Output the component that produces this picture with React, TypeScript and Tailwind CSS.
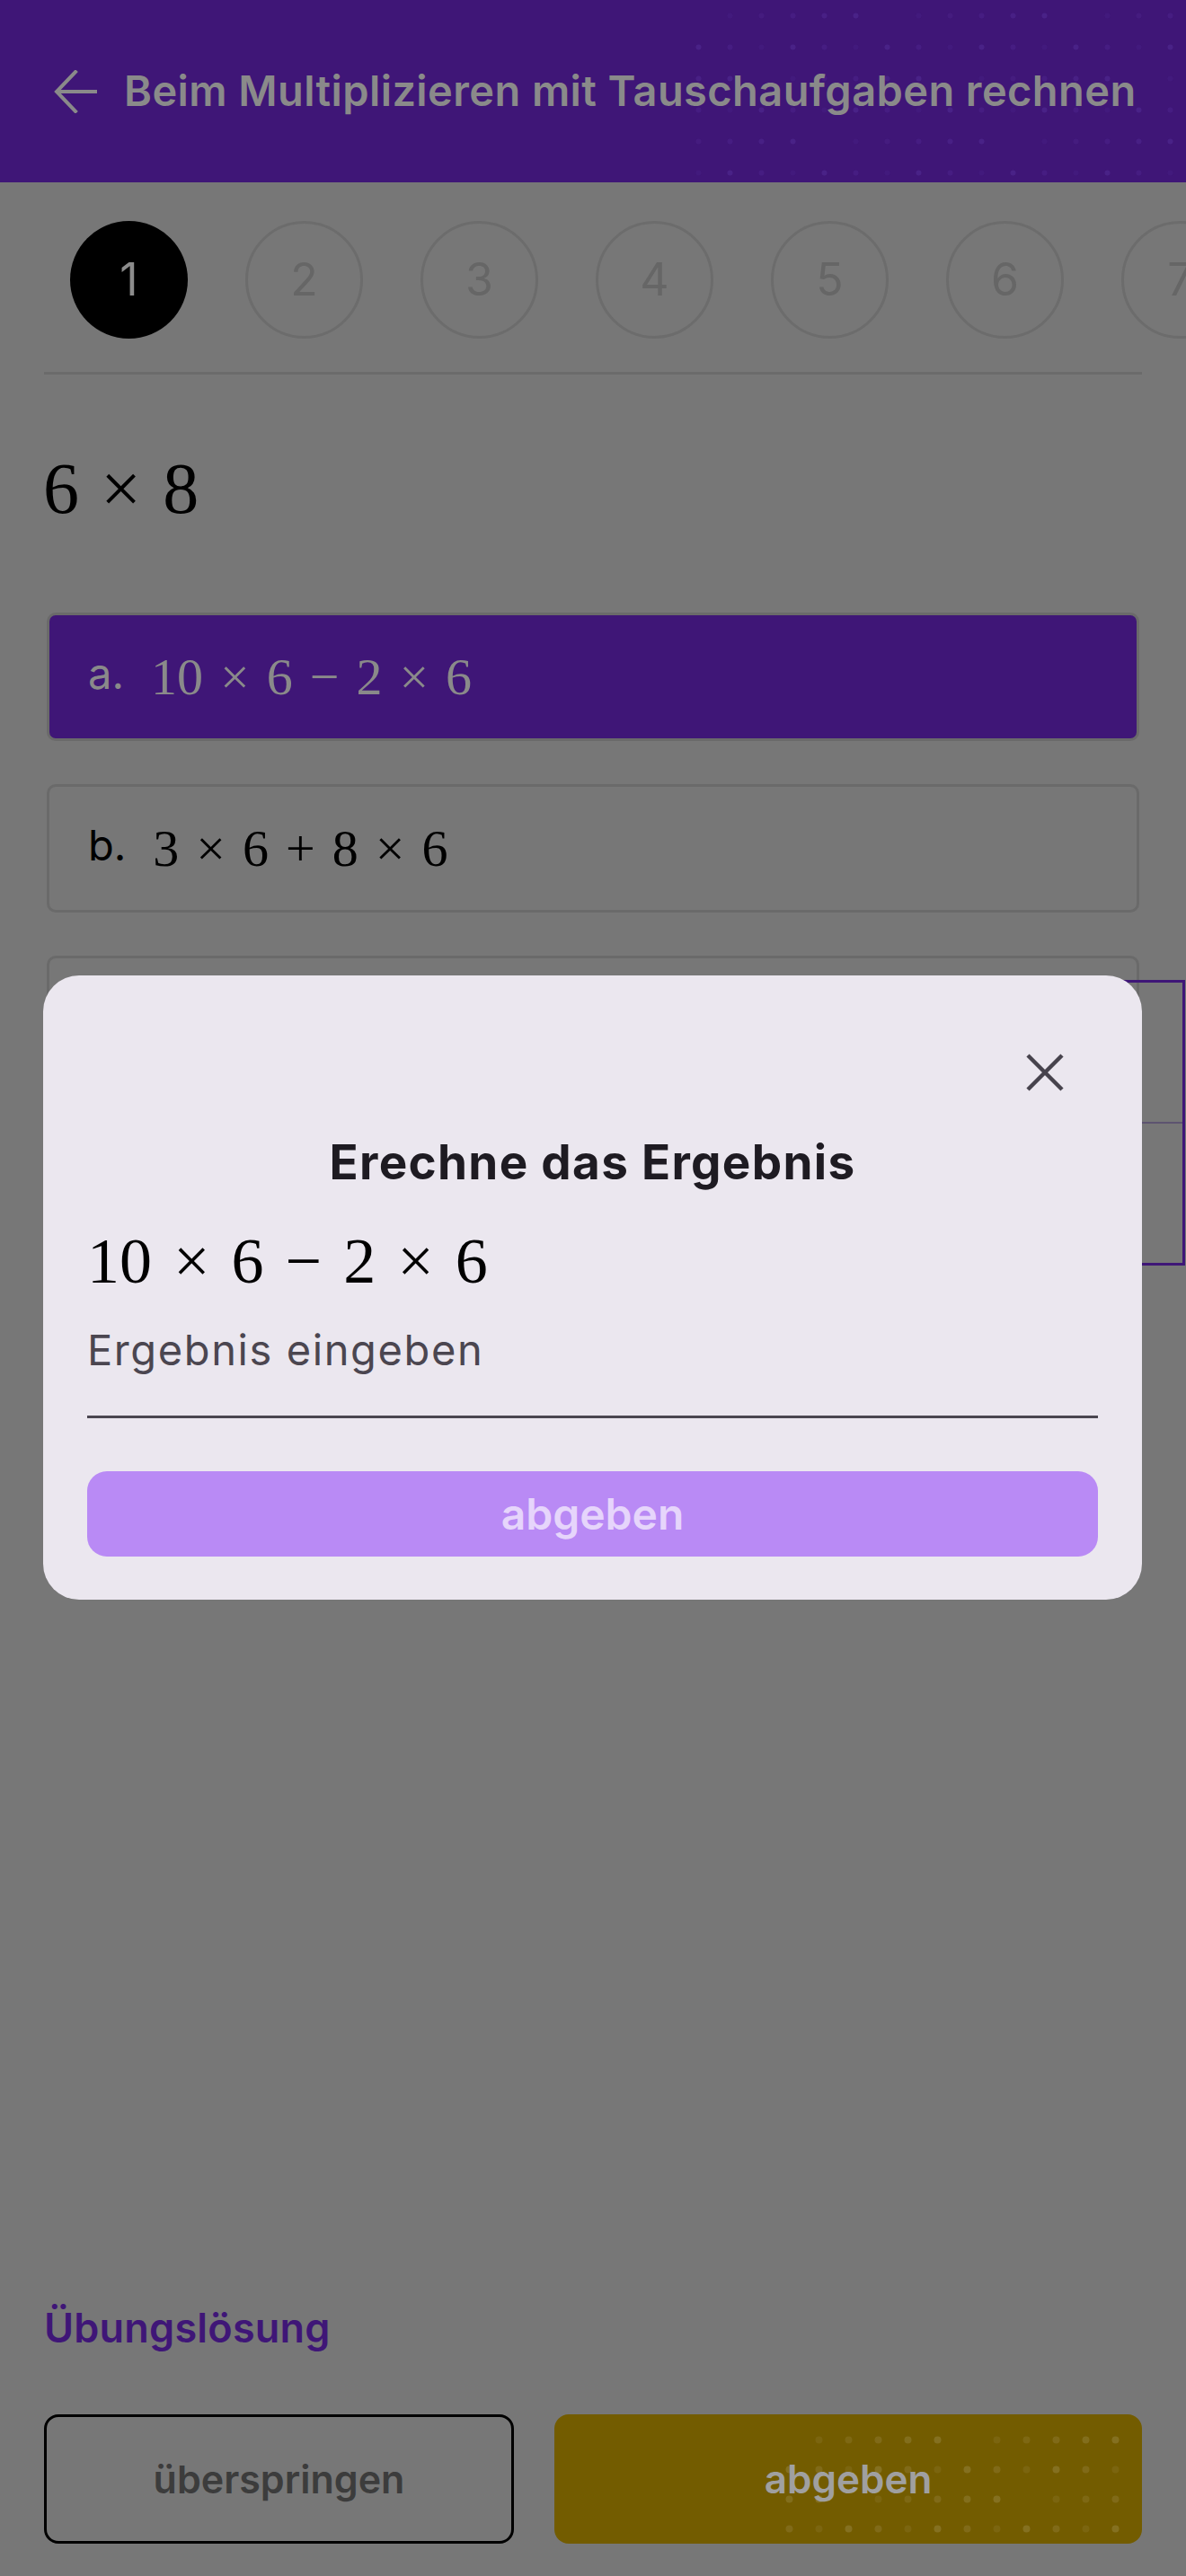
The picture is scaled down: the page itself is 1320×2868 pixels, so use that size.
const sans = "font-[family-name:Inter,'Noto_Sans',sans-serif]";
const serif = "font-[family-name:'Liberation_Serif','DejaVu_Serif',serif]";

type Tok = { t: string; op?: boolean };

const toks = (s: string): Tok[] =>
  s.split(' ').map((t) => ({ t, op: t === '×' || t === '−' || t === '+' }));

const MathExpr = ({ expr, size, gap }: { expr: string; size: string; gap: string }) => (
  <span className={`${serif} ${size} leading-none whitespace-nowrap inline-flex items-center`}>
    {toks(expr).map((k, i) =>
      k.op ? (
        <span key={i} className={gap}>
          {k.t}
        </span>
      ) : (
        <span key={i}>{k.t}</span>
      )
    )}
  </span>
);

const ArrowBack = () => (
  <svg width="48" height="48" viewBox="0 0 48 48" fill="none" stroke="#8a8a8a" strokeWidth="4" strokeLinecap="square">
    <path d="M47 24H4" />
    <path d="M24 2L3 24l21 22" />
  </svg>
);

const CloseIcon = () => (
  <svg width="42" height="42" viewBox="0 0 42 42" stroke="#47434d" strokeWidth="4.5">
    <path d="M2 2L40 40M40 2L2 40" />
  </svg>
);

// dotted texture used on the header and the yellow button
const Dots = ({ cols, rows, step, r, color, base }: { cols: number; rows: number; step: number; r: number; color: string; base: number }) => {
  const dots = [];
  for (let y = 0; y < rows; y++) {
    for (let x = 0; x < cols; x++) {
      const v = (x * 7 + y * 11 + x * y * 3) % 6;
      if (v === 0) continue;
      dots.push(<circle key={`${x}-${y}`} cx={x * step + step / 2} cy={y * step + step / 2} r={r} fill={color} opacity={base + v * 0.06} />);
    }
  }
  return (
    <svg width={cols * step} height={rows * step}>
      {dots}
    </svg>
  );
};

const steps = [1, 2, 3, 4, 5, 6, 7];

const options = [
  { l: 'a.', e: '10 × 6 − 2 × 6', active: true },
  { l: 'b.', e: '3 × 6 + 8 × 6' },
  { l: 'c.', e: '5 × 6 + 1 × 6' },
  { l: 'd.', e: '8 × 6' },
];

export default function App() {
  return (
    <div className={`${sans} relative w-[1320px] h-[2868px] overflow-hidden bg-[#777777]`}>
      <div className="flex flex-col h-full">
        {/* header */}
        <div className="relative h-[203px] bg-[#3f1677] flex items-center pl-[60px] overflow-hidden">
          <div className="absolute right-0 top-0">
            <Dots cols={16} rows={6} step={35} r={3} color="#5a34a0" base={0.1} />
          </div>
          <div className="relative flex items-center gap-[30px]">
            <ArrowBack />
            <span className="text-[47px] font-semibold text-[#8a8a8a] tracking-[0.4px]">
              Beim Multiplizieren mit Tauschaufgaben rechnen
            </span>
          </div>
        </div>

        {/* step circles */}
        <div className="flex gap-[64px] pl-[78px] pt-[43px] overflow-hidden">
          {steps.map((n) =>
            n === 1 ? (
              <div key={n} className="shrink-0 w-[131px] h-[131px] rounded-full bg-black flex items-center justify-center text-[50px] text-[#8c8c8c]">
                {n}
              </div>
            ) : (
              <div key={n} className="shrink-0 w-[131px] h-[131px] rounded-full border-[3px] border-[#6c6c6c] flex items-center justify-center text-[50px] text-[#666666]">
                {n}
              </div>
            )
          )}
        </div>

        <div className="mt-[37px] mx-[49px] h-[3px] bg-[#6b6b6b]" />

        {/* question */}
        <div className="mt-[72px] h-[110px] flex items-center pl-[48px] text-black">
          <MathExpr expr="6 × 8" size="text-[80px]" gap="mx-[24px]" />
        </div>

        {/* answers */}
        <div className="mt-[83px] mx-[52px] flex flex-col gap-[48px]">
          {options.map((o) =>
            o.active ? (
              <div key={o.l} className="h-[143px] rounded-[10px] bg-[#3f1677] border-[3px] border-[#6a6a6a] flex items-center pl-[43px] gap-[30px] text-[#8a8a8a]">
                <span className="text-[47px] -mt-[6px]">{o.l}</span>
                <MathExpr expr={o.e} size="text-[58px]" gap="mx-[19px]" />
              </div>
            ) : (
              <div key={o.l} className="h-[143px] rounded-[10px] border-[3px] border-[#6a6a6a] flex items-center pl-[43px] gap-[30px] text-black">
                <span className="text-[47px] -mt-[6px]">{o.l}</span>
                <MathExpr expr={o.e} size="text-[58px]" gap="mx-[19px]" />
              </div>
            )
          )}
        </div>

        {/* footer */}
        <div className="mt-auto px-[49px] pb-[36px]">
          <div className="text-[45px] font-semibold text-[#3f1677] leading-[50px] tracking-[0.2px]">Übungslösung</div>
          <div className="mt-[71px] flex gap-[45px]">
            <button className="w-[523px] h-[144px] rounded-[16px] border-[3px] border-black text-[43px] font-semibold text-[#3c3c3c]">
              überspringen
            </button>
            <button className="relative flex-1 h-[144px] rounded-[16px] bg-[#735c00] overflow-hidden flex items-center justify-center">
              <div className="absolute left-[245px] top-[12px]">
                <Dots cols={12} rows={4} step={33} r={4} color="#9a8a48" base={0.15} />
              </div>
              <span className="relative text-[44px] font-semibold text-[#a0a0a0]">abgeben</span>
            </button>
          </div>
        </div>
      </div>

      {/* popover partly hidden behind the dialog */}
      <div className="absolute left-[1000px] top-[1091px] w-[319px] h-[318px] border-[3px] border-[#3f1677] flex flex-col">
        <div className="h-[157px] border-b-[2px] border-[#5d5470]" />
      </div>

      {/* dialog */}
      <div className="absolute left-[48px] top-[1086px] w-[1223px] rounded-[40px] bg-[#ebe7ef] pt-[87px] px-[49px] pb-[48px]">
        <div className="flex justify-end pr-[38px] h-[42px]">
          <CloseIcon />
        </div>
        <div className="mt-[48px] text-center text-[53px] leading-[62px] font-bold text-[#1e1b22] tracking-[1.3px]">Erechne das Ergebnis</div>
        <div className="mt-[39px] h-[80px] flex items-center text-black">
          <MathExpr expr="10 × 6 − 2 × 6" size="text-[72px]" gap="mx-[24px]" />
        </div>
        <div className="mt-[32px] h-[103px] border-b-[3px] border-[#4a4650]">
          <div className="text-[47px] leading-[54px] text-[#4b4650] tracking-[1.6px]">Ergebnis eingeben</div>
        </div>
        <button className="mt-[59px] w-full h-[95px] rounded-[22px] bg-[#b98af5] text-[48px] font-semibold text-[#e6d5fb]">
          abgeben
        </button>
      </div>
    </div>
  );
}
